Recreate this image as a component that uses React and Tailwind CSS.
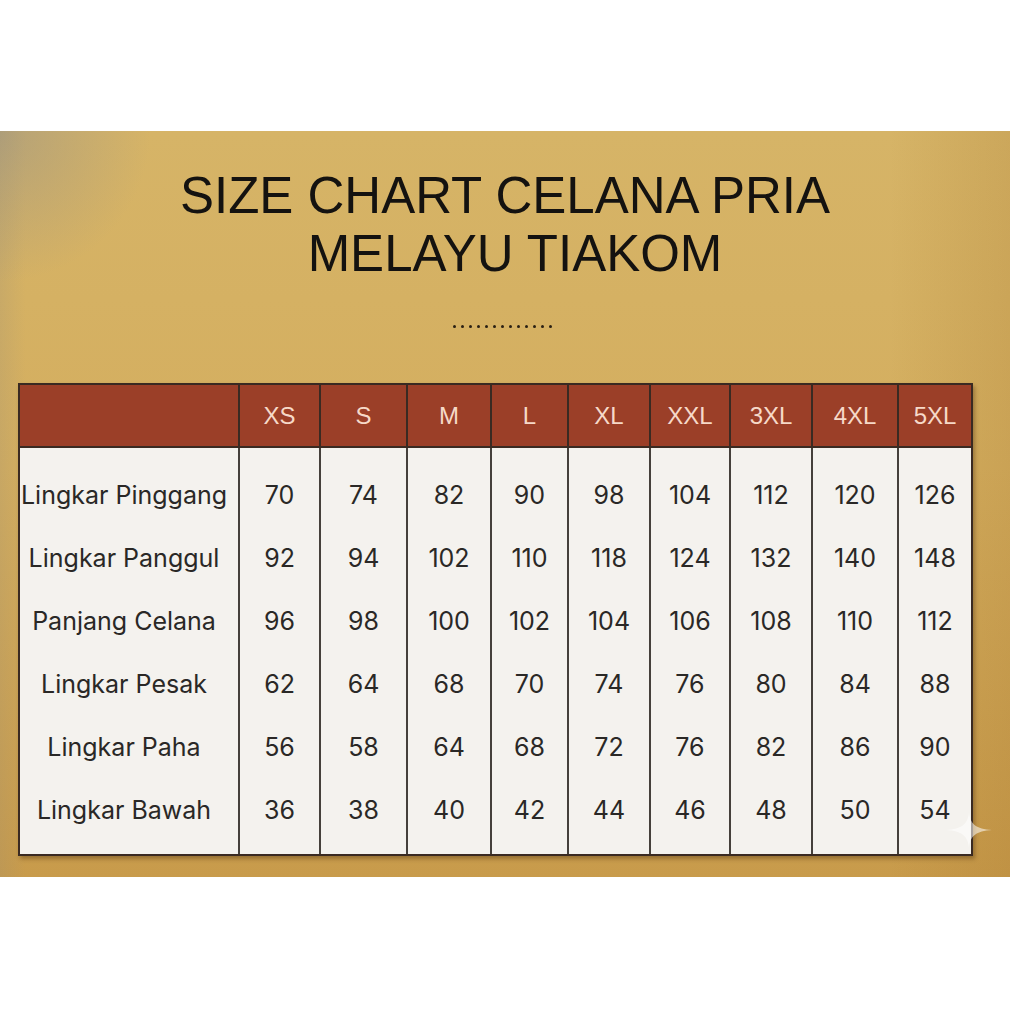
import React from 'react';

const sizes = ['XS', 'S', 'M', 'L', 'XL', 'XXL', '3XL', '4XL', '5XL'];

const rows = [
  { label: 'Lingkar Pinggang', values: [70, 74, 82, 90, 98, 104, 112, 120, 126] },
  { label: 'Lingkar Panggul', values: [92, 94, 102, 110, 118, 124, 132, 140, 148] },
  { label: 'Panjang Celana', values: [96, 98, 100, 102, 104, 106, 108, 110, 112] },
  { label: 'Lingkar Pesak', values: [62, 64, 68, 70, 74, 76, 80, 84, 88] },
  { label: 'Lingkar Paha', values: [56, 58, 64, 68, 72, 76, 82, 86, 90] },
  { label: 'Lingkar Bawah', values: [36, 38, 40, 42, 44, 46, 48, 50, 54] },
];

const grid =
  'grid grid-cols-[218px_81px_87px_84px_77px_82px_80px_82px_86px_74px]';

const Sparkle = () => (
  <svg
    className="absolute left-[946px] top-[812px]"
    width="46"
    height="36"
    viewBox="0 0 46 36"
  >
    <path
      d="M23 0 C24 12 30 17 46 18 C30 19 24 24 23 36 C22 24 16 19 0 18 C16 17 22 12 23 0 Z"
      fill="#ffffff"
      fillOpacity="0.55"
    />
  </svg>
);

const App = () => {
  return (
    <div className="relative w-[1010px] h-[1010px] bg-white pt-[131px]">
      <div className="h-[746px] pt-[36px] bg-[radial-gradient(circle_at_0%_0%,rgba(140,140,140,0.45)_0%,rgba(140,140,140,0)_12%),linear-gradient(90deg,rgba(150,140,120,0.2)_0%,rgba(150,140,120,0)_2.5%),linear-gradient(270deg,rgba(150,100,30,0.16)_0%,rgba(150,100,30,0)_12%),linear-gradient(180deg,#d6b467_0%,#d4ae5f_45%,#c89b4b_100%)]">
        <h1 className="text-center text-[51px] leading-[58px] text-[#141210] font-['Liberation_Sans',Arial,sans-serif]">
          <div>SIZE CHART CELANA PRIA</div>
          <div className="pl-[20px]">MELAYU TIAKOM</div>
        </h1>

        <div className="mt-[42px] flex justify-center gap-[5px] pr-[6px]">
          {Array.from({ length: 13 }).map((_, i) => (
            <span key={i} className="block w-[3px] h-[3px] rounded-full bg-[#2a2014]" />
          ))}
        </div>

        <div className="mt-[55px] ml-[18px] w-[955px] border-2 border-[#3a2a22] shadow-[2px_3px_4px_rgba(60,35,10,0.35)]">
          <div className={`${grid} h-[63px] bg-[#9b3f28] border-b-2 border-[#3a2a22] font-['Liberation_Sans',Arial,sans-serif] text-[24px] text-[#f6d9c8]`}>
            <div />
            {sizes.map((s) => (
              <div key={s} className="flex items-center justify-center border-l-2 border-[#3a2a22]">
                {s}
              </div>
            ))}
          </div>

          <div className={`${grid} bg-[#f4f2ee] font-['Inter','Noto_Sans',sans-serif] text-[25px] text-[#2a2826]`}>
            <div className="pt-[16px] pb-[12px] pr-[10px]">
              {rows.map((r) => (
                <div key={r.label} className="h-[63px] flex items-center justify-center whitespace-nowrap">
                  {r.label}
                </div>
              ))}
            </div>
            {sizes.map((s, c) => (
              <div key={s} className="pt-[16px] pb-[12px] border-l-2 border-[#45403b]">
                {rows.map((r) => (
                  <div key={r.label} className="h-[63px] flex items-center justify-center">
                    {r.values[c]}
                  </div>
                ))}
              </div>
            ))}
          </div>
        </div>
      </div>
      <Sparkle />
    </div>
  );
};

export default App;
